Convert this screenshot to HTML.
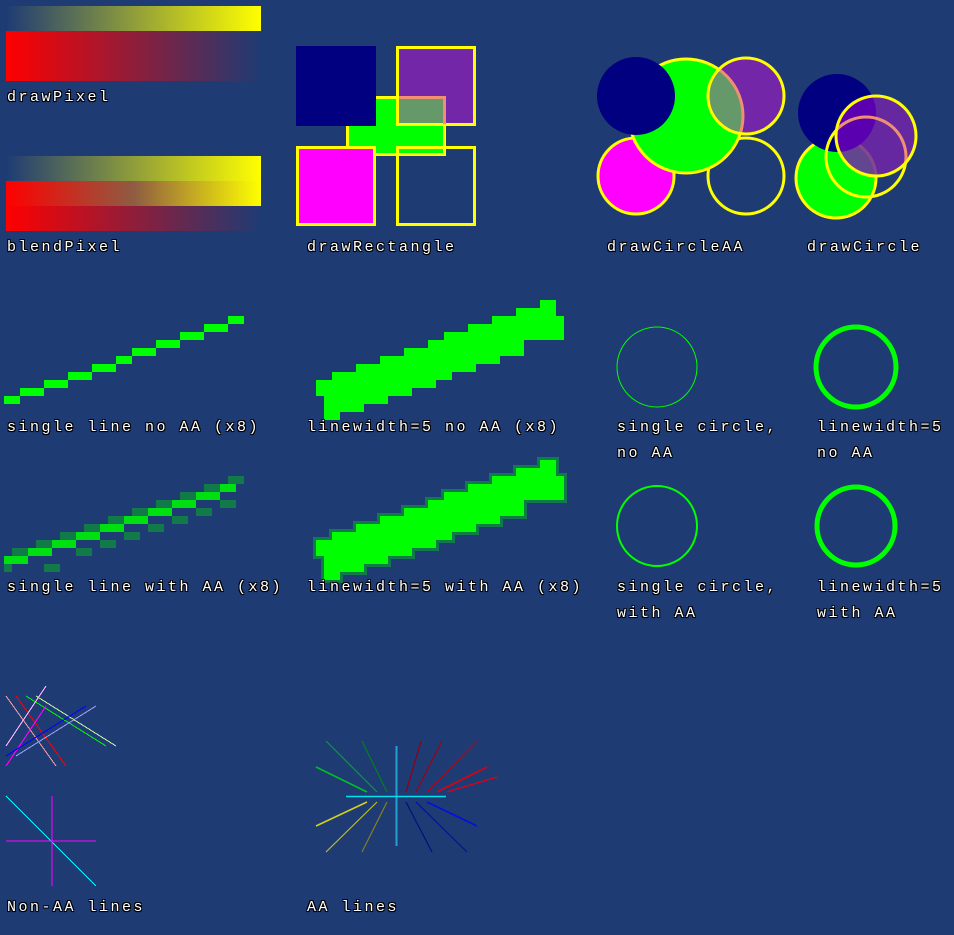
<!DOCTYPE html>
<html><head><meta charset="utf-8"><style>
html,body{margin:0;padding:0;background:#1f3b74;}
body{width:954px;height:935px;position:relative;overflow:hidden;}
svg{position:absolute;left:0;top:0;}
.t{position:absolute;font-family:"Liberation Mono",monospace;font-size:15px;letter-spacing:2.5px;color:#fff;line-height:26px;white-space:pre;
text-shadow:1px 1px 0 #000,-1px -1px 0 #000,1px -1px 0 #000,-1px 1px 0 #000,0 1px 1px #000;}
</style></head><body>
<svg width="954" height="935" xmlns="http://www.w3.org/2000/svg">
<defs>
<linearGradient id="gy" x1="0" x2="1"><stop offset="0" stop-color="#ffff00" stop-opacity="0"/><stop offset="1" stop-color="#ffff00"/></linearGradient>
<linearGradient id="gr" x1="0" x2="1"><stop offset="0" stop-color="#ff0000"/><stop offset="1" stop-color="#ff0000" stop-opacity="0"/></linearGradient>
<linearGradient id="go" x1="0" x2="1"><stop offset="0" stop-color="#ff0000"/><stop offset="0.5" stop-color="#8e5c42"/><stop offset="1" stop-color="#ffff00"/></linearGradient>
<g id="thick">
<rect x="540" y="0" width="16" height="8"/>
<rect x="516" y="8" width="40" height="8"/>
<rect x="492" y="16" width="72" height="8"/>
<rect x="468" y="24" width="96" height="8"/>
<rect x="444" y="32" width="120" height="8"/>
<rect x="428" y="40" width="96" height="8"/>
<rect x="404" y="48" width="120" height="8"/>
<rect x="380" y="56" width="120" height="8"/>
<rect x="356" y="64" width="120" height="8"/>
<rect x="332" y="72" width="120" height="8"/>
<rect x="316" y="80" width="120" height="8"/>
<rect x="316" y="88" width="96" height="8"/>
<rect x="324" y="96" width="64" height="8"/>
<rect x="324" y="104" width="40" height="8"/>
<rect x="324" y="112" width="16" height="8"/>
</g>
</defs>
<rect x="6" y="6" width="255" height="25" fill="url(#gy)"/>
<rect x="6" y="31" width="255" height="50" fill="url(#gr)"/>
<rect x="6" y="156" width="255" height="25" fill="url(#gy)"/>
<rect x="6" y="181" width="255" height="25" fill="url(#go)"/>
<rect x="6" y="206" width="255" height="25" fill="url(#gr)"/>
<rect x="347.5" y="97.5" width="97" height="57" fill="#00ff00" stroke="#ffff00" stroke-width="3"/>
<rect x="296" y="46" width="80" height="80" fill="#000080"/>
<rect x="397.5" y="47.5" width="77" height="77" fill="#7326a8" stroke="#ffff00" stroke-width="3"/>
<rect x="399" y="99" width="44" height="24" fill="#66996a"/>
<path d="M399 97.5H444.5V124" fill="none" stroke="#f09070" stroke-width="3"/>
<rect x="297.5" y="147.5" width="77" height="77" fill="#ff00ff" stroke="#ffff00" stroke-width="3"/>
<rect x="397.5" y="147.5" width="77" height="77" fill="none" stroke="#ffff00" stroke-width="3"/>
<circle cx="636" cy="176" r="38" fill="#ff00ff" stroke="#ffff00" stroke-width="3"/>
<circle cx="746" cy="176" r="38" fill="none" stroke="#ffff00" stroke-width="3"/>
<circle cx="686" cy="116" r="57" fill="#00ff00" stroke="#ffff00" stroke-width="3"/>
<circle cx="636" cy="96" r="39" fill="#000080"/>
<clipPath id="cg"><circle cx="686" cy="116" r="57"/></clipPath>
<clipPath id="cp"><circle cx="746" cy="96" r="38"/></clipPath>
<circle cx="746" cy="96" r="38" fill="#7326a8"/>
<circle cx="746" cy="96" r="38" fill="#66996a" clip-path="url(#cg)"/>
<circle cx="686" cy="116" r="57" fill="none" stroke="#f09070" stroke-width="3" clip-path="url(#cp)"/>
<circle cx="746" cy="96" r="38" fill="none" stroke="#ffff00" stroke-width="3"/>
<circle cx="836" cy="178" r="40" fill="#00ff00" stroke="#ffff00" stroke-width="3"/>
<circle cx="837" cy="113" r="39" fill="#000080"/>
<circle cx="866" cy="157" r="40" fill="none" stroke="#ffff00" stroke-width="3"/>
<circle cx="876" cy="136" r="40" fill="#7326a8" fill-opacity="0.85"/>
<clipPath id="cd"><circle cx="876" cy="136" r="40"/></clipPath>
<circle cx="837" cy="113" r="39" fill="#5a00b0" clip-path="url(#cd)"/>
<circle cx="866" cy="157" r="40" fill="none" stroke="#f09070" stroke-width="3" clip-path="url(#cd)"/>
<circle cx="876" cy="136" r="40" fill="none" stroke="#ffff00" stroke-width="3"/>
<g fill="#00ff00">
<rect x="4" y="396" width="16" height="8"/><rect x="20" y="388" width="24" height="8"/><rect x="44" y="380" width="24" height="8"/>
<rect x="68" y="372" width="24" height="8"/><rect x="92" y="364" width="24" height="8"/><rect x="116" y="356" width="16" height="8"/>
<rect x="132" y="348" width="24" height="8"/><rect x="156" y="340" width="24" height="8"/><rect x="180" y="332" width="24" height="8"/>
<rect x="204" y="324" width="24" height="8"/><rect x="228" y="316" width="16" height="8"/>
</g>
<g fill="#117a48">
<rect x="4" y="564" width="8" height="8"/><rect x="12" y="548" width="24" height="8"/><rect x="36" y="540" width="24" height="8"/><rect x="60" y="532" width="24" height="8"/><rect x="84" y="524" width="24" height="8"/><rect x="108" y="516" width="24" height="8"/><rect x="132" y="508" width="24" height="8"/><rect x="156" y="500" width="24" height="8"/><rect x="180" y="492" width="24" height="8"/><rect x="204" y="484" width="24" height="8"/><rect x="228" y="476" width="16" height="8"/>
<rect x="44" y="564" width="16" height="8"/><rect x="76" y="548" width="16" height="8"/><rect x="100" y="540" width="16" height="8"/><rect x="124" y="532" width="16" height="8"/><rect x="148" y="524" width="16" height="8"/><rect x="172" y="516" width="16" height="8"/><rect x="196" y="508" width="16" height="8"/><rect x="220" y="500" width="16" height="8"/>
</g>
<g fill="#00e010">
<rect x="4" y="556" width="24" height="8"/><rect x="28" y="548" width="24" height="8"/><rect x="52" y="540" width="24" height="8"/><rect x="76" y="532" width="24" height="8"/><rect x="100" y="524" width="24" height="8"/><rect x="124" y="516" width="24" height="8"/><rect x="148" y="508" width="24" height="8"/><rect x="172" y="500" width="24" height="8"/><rect x="196" y="492" width="24" height="8"/><rect x="220" y="484" width="16" height="8"/>
</g>
<use href="#thick" y="300" fill="#00ff00"/>
<use href="#thick" y="460" fill="#117a48" stroke="#117a48" stroke-width="6"/>
<use href="#thick" y="460" fill="#00ff00"/>
<circle cx="657" cy="367" r="40" fill="none" stroke="#00ff00" stroke-width="1"/>
<circle cx="856" cy="367" r="40" fill="none" stroke="#00ff00" stroke-width="5"/>
<circle cx="657" cy="526" r="40" fill="none" stroke="#00ff00" stroke-width="2"/>
<circle cx="856" cy="526" r="39" fill="none" stroke="#00ff00" stroke-width="5"/>
<g stroke-width="1" shape-rendering="crispEdges">
<line x1="6" y1="696" x2="56" y2="766" stroke="#ffa0a0"/>
<line x1="16" y1="696" x2="66" y2="766" stroke="#ff0000"/>
<line x1="26" y1="696" x2="106" y2="746" stroke="#00ff00"/>
<line x1="36" y1="696" x2="116" y2="746" stroke="#d0ffa0"/>
<line x1="46" y1="686" x2="6" y2="746" stroke="#ffb0ff"/>
<line x1="46" y1="706" x2="6" y2="766" stroke="#ff00ff"/>
<line x1="86" y1="706" x2="6" y2="756" stroke="#0000ff"/>
<line x1="96" y1="706" x2="16" y2="756" stroke="#a0a0ff"/>
<line x1="6" y1="796" x2="96" y2="886" stroke="#00ffff"/>
<line x1="52" y1="796" x2="52" y2="886" stroke="#ff00ff"/>
<line x1="6" y1="841" x2="96" y2="841" stroke="#ff00ff"/>
</g>
<g stroke-width="1.2">
<line x1="377" y1="792" x2="326" y2="741" stroke="#00a030"/>
<line x1="387" y1="792" x2="362" y2="741" stroke="#008020"/>
<line x1="367" y1="792" x2="316" y2="767" stroke="#00c020" stroke-width="1.6"/>
<line x1="406" y1="792" x2="421" y2="741" stroke="#900010"/>
<line x1="416" y1="792" x2="442" y2="741" stroke="#a00010"/>
<line x1="427" y1="792" x2="477" y2="741" stroke="#c00010"/>
<line x1="437" y1="792" x2="487" y2="767" stroke="#e00010" stroke-width="1.6"/>
<line x1="447" y1="792" x2="497" y2="777" stroke="#e00010"/>
<line x1="367" y1="802" x2="316" y2="826" stroke="#d0d020" stroke-width="1.6"/>
<line x1="377" y1="802" x2="326" y2="852" stroke="#c0c020"/>
<line x1="387" y1="802" x2="362" y2="852" stroke="#808020"/>
<line x1="406" y1="802" x2="432" y2="852" stroke="#001080"/>
<line x1="416" y1="802" x2="467" y2="852" stroke="#0010a0"/>
<line x1="427" y1="802" x2="477" y2="826" stroke="#0010e0" stroke-width="1.6"/>
<line x1="396.5" y1="746" x2="396.5" y2="846" stroke="#20a0d0" stroke-width="2"/>
<line x1="346" y1="796.5" x2="446" y2="796.5" stroke="#00e0f0" stroke-width="1.5"/>
</g>
</svg>
<div class="t" style="left:7px;top:85px">drawPixel</div>
<div class="t" style="left:7px;top:235px">blendPixel</div>
<div class="t" style="left:307px;top:235px">drawRectangle</div>
<div class="t" style="left:607px;top:235px">drawCircleAA</div>
<div class="t" style="left:807px;top:235px">drawCircle</div>
<div class="t" style="left:7px;top:415px">single line no AA (x8)</div>
<div class="t" style="left:307px;top:415px">linewidth=5 no AA (x8)</div>
<div class="t" style="left:617px;top:415px">single circle,
no AA</div>
<div class="t" style="left:817px;top:415px">linewidth=5
no AA</div>
<div class="t" style="left:7px;top:575px">single line with AA (x8)</div>
<div class="t" style="left:307px;top:575px">linewidth=5 with AA (x8)</div>
<div class="t" style="left:617px;top:575px">single circle,
with AA</div>
<div class="t" style="left:817px;top:575px">linewidth=5
with AA</div>
<div class="t" style="left:7px;top:895px">Non-AA lines</div>
<div class="t" style="left:307px;top:895px">AA lines</div>
</body></html>
